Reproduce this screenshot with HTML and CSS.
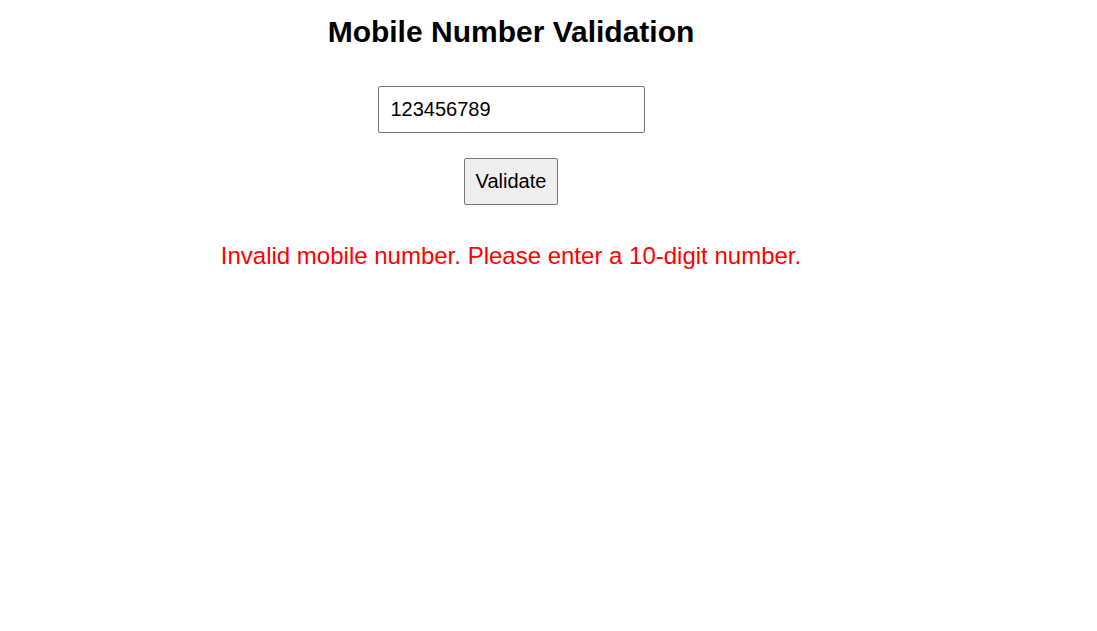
FILE: index.html
```html
<!DOCTYPE html>
<html>
<head>
<meta charset="utf-8">
<link rel="stylesheet" href="styles.css">
</head>
<body>
<div class="container">
  <h1 class="title">Mobile Number Validation</h1>
  <input class="mobile-input" type="text" value="123456789">
  <button class="validate-btn">Validate</button>
  <p class="error">Invalid mobile number. Please enter a 10-digit number.</p>
</div>
</body>
</html>
```
FILE: styles.css
```css
html, body {
  margin: 0;
  padding: 0;
  background: #fff;
}
body {
  font-family: "Liberation Sans", Arial, sans-serif;
}
.container {
  width: 1022px;
  display: flex;
  flex-direction: column;
  align-items: center;
  padding-top: 14px;
}
.title {
  margin: 0;
  font-size: 30px;
  font-weight: bold;
  line-height: 36px;
  color: #000;
}
.mobile-input {
  margin-top: 36px;
  box-sizing: border-box;
  width: 267px;
  height: 47px;
  padding: 0 12px;
  font-family: "Liberation Sans", Arial, sans-serif;
  font-size: 20px;
  color: #000;
  border: 1px solid #767676;
  border-radius: 2px;
  outline: none;
}
.validate-btn {
  margin-top: 25px;
  box-sizing: border-box;
  width: 94px;
  height: 47px;
  font-family: "Liberation Sans", Arial, sans-serif;
  font-size: 20px;
  color: #000;
  background: #efefef;
  border: 1px solid #767676;
  border-radius: 2px;
  padding: 0;
}
.error {
  margin: 38px 0 0;
  font-size: 24px;
  line-height: 26px;
  color: #ff0000;
}
```
